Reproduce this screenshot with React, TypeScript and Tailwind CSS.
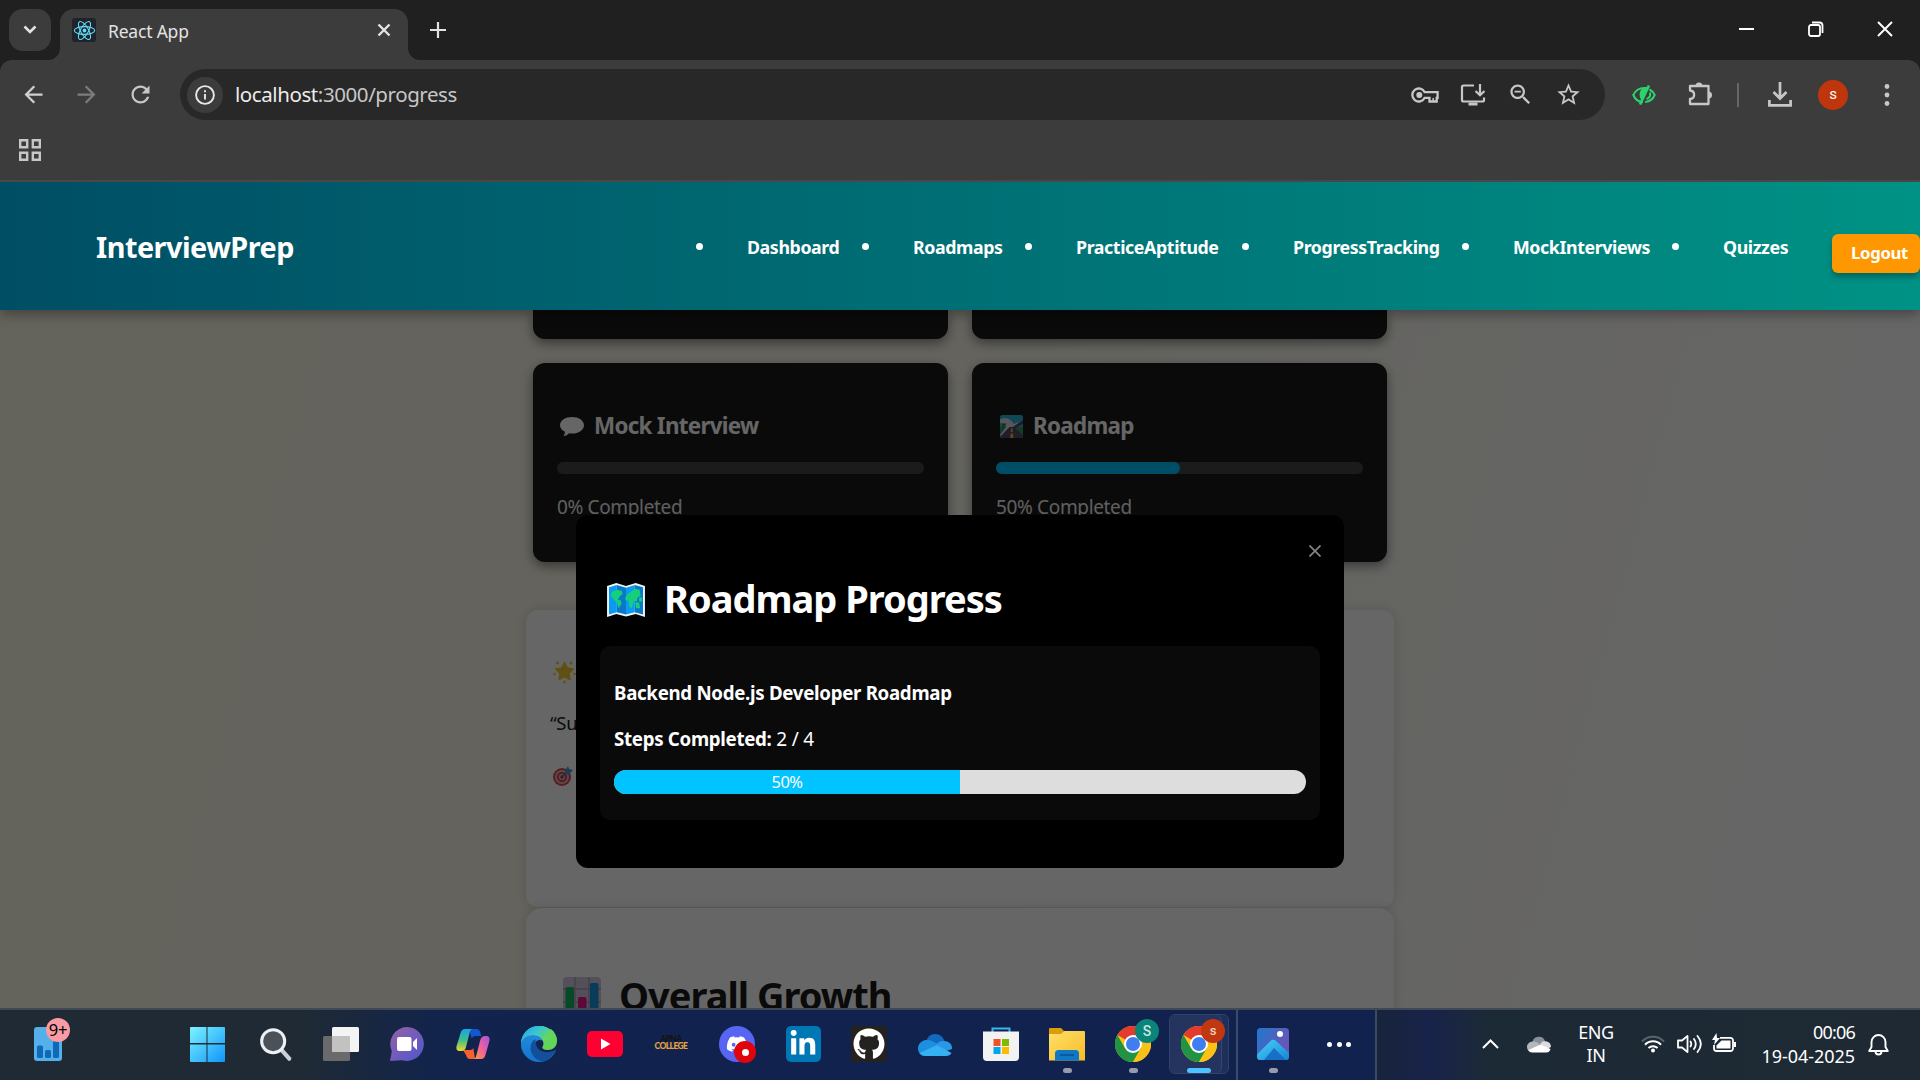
import React from "react";
import { FaGithub, FaDiscord, FaLinkedinIn } from "react-icons/fa";

const SANS = "font-['Noto_Sans','Open_Sans',sans-serif]";

function Glyph({ d, size = 27, className = "" }: { d: string; size?: number; className?: string }) {
  return (
    <svg width={size} height={size} viewBox="0 0 24 24" fill="currentColor" className={"shrink-0 " + className}>
      <path d={d} />
    </svg>
  );
}

function TabStrip() {
  return (
    <div className="flex h-[60px] shrink-0 bg-[#202020] text-[#e3e3e3]">
      <div className="mt-[9px] ml-[9px] flex h-[42px] w-[42px] items-center justify-center rounded-[14px] bg-[#3c3c3c]">
        <svg width="14" height="10" viewBox="0 0 14 10" fill="none" stroke="currentColor" strokeWidth="2.6">
          <path d="M1.5 1.5 7 7l5.500-5.500" />
        </svg>
      </div>
      <svg width="12" height="12" viewBox="0 0 12 12" className="mt-12 -ml-[3px] shrink-0">
        <path d="M12 0v12H0A12 12 0 0 0 12 0z" fill="#3c3c3c" />
      </svg>
      <div className="mt-[9px] flex h-[51px] w-[348px] items-start rounded-t-[14px] bg-[#3c3c3c] pt-[9px] pl-3">
        <div className="flex h-6 w-6 items-center justify-center rounded-[3px] bg-[#20232a]">
          <svg width="23" height="21" viewBox="0 0 23 21" fill="none" stroke="#61dafb" strokeWidth="1.1">
            <circle cx="11.500" cy="10.500" r="1.900" fill="#61dafb" stroke="none" />
            <ellipse cx="11.500" cy="10.500" rx="10.200" ry="3.900" />
            <ellipse cx="11.500" cy="10.500" rx="10.200" ry="3.900" transform="rotate(60 11.500 10.500)" />
            <ellipse cx="11.500" cy="10.500" rx="10.200" ry="3.900" transform="rotate(120 11.500 10.500)" />
          </svg>
        </div>
        <span className="mt-px ml-[12px] w-[269px] text-[17.500px] leading-6 tracking-[-0.2px] whitespace-nowrap">React App</span>
        <svg width="14" height="14" viewBox="0 0 14 14" stroke="currentColor" strokeWidth="2.4" className="mt-[5px] shrink-0">
          <path d="M1.500 1.500 12.500 12.500M12.500 1.500 1.500 12.500" />
        </svg>
      </div>
      <svg width="12" height="12" viewBox="0 0 12 12" className="mt-12 shrink-0">
        <path d="M0 0v12h12A12 12 0 0 1 0 0z" fill="#3c3c3c" />
      </svg>
      <svg width="16" height="16" viewBox="0 0 16 16" stroke="currentColor" strokeWidth="2.2" className="mt-[22px] ml-[10px]">
        <path d="M8 0v16M0 8h16" />
      </svg>
      <div className="mt-[21px] mr-[27px] ml-auto flex gap-[53px] text-white">
        <svg width="16" height="16" viewBox="0 0 16 16" stroke="currentColor" strokeWidth="2">
          <path d="M0 8h15" />
        </svg>
        <svg width="16" height="16" viewBox="0 0 16 16" fill="none" stroke="currentColor" strokeWidth="1.800">
          <rect x="1" y="4" width="11" height="11" rx="2" />
          <path d="M4 1.500h7.500a3 3 0 0 1 3 3V12" />
        </svg>
        <svg width="16" height="16" viewBox="0 0 16 16" stroke="currentColor" strokeWidth="1.900">
          <path d="M1 1l14 14M15 1 1 15" />
        </svg>
      </div>
    </div>
  );
}

function Cell({ children }: { children: React.ReactNode }) {
  return <div className="flex h-[51px] w-12 shrink-0 items-center justify-center">{children}</div>;
}

function Toolbar() {
  return (
    <div className="shrink-0 bg-[#202020]">
      <div className="flex h-[120px] flex-col rounded-t-[12px] bg-[#3c3c3c] text-[#c7c7c7]">
        <div className="mt-[9px] flex h-[51px] items-center">
          <Glyph className="ml-5 text-[#d0d0d0]" d="M20 11H7.830l5.590-5.590L12 4l-8 8 8 8 1.410-1.410L7.830 13H20v-2z" />
          <Glyph className="ml-[26px] text-[#7c7c7c]" d="M12 4l-1.410 1.410L16.170 11H4v2h12.170l-5.580 5.590L12 20l8-8z" />
          <Glyph
            className="ml-[27px]"
            d="M17.650 6.350C16.200 4.900 14.210 4 12 4c-4.420 0-7.990 3.580-7.990 8s3.570 8 7.990 8c3.730 0 6.840-2.550 7.730-6h-2.080c-.820 2.330-3.040 4-5.650 4-3.310 0-6-2.690-6-6s2.690-6 6-6c1.660 0 3.140.690 4.220 1.780L13 11h7V4l-2.350 2.350z"
          />
          <div className="ml-[26px] flex h-[51px] w-[1425px] items-center rounded-full bg-[#282828] pr-3 pl-[7px]">
            <div className="flex h-[36px] w-[36px] items-center justify-center rounded-full bg-[#3c3c3c]">
              <svg width="20" height="20" viewBox="0 0 20 20" fill="none" stroke="#e8e8e8" strokeWidth="1.900">
                <circle cx="10" cy="10" r="8.900" />
                <path d="M10 9v5.500M10 5.300v2" />
              </svg>
            </div>
            <span className="mt-[-1px] ml-3 grow text-[20.500px] leading-7 tracking-[-0.42px] whitespace-nowrap">
              <span className="text-[#ececec]">localhost</span>:3000/progress
            </span>
            <Cell>
              <svg width="28" height="18" viewBox="0 0 28 18" fill="none" stroke="currentColor" strokeWidth="2.300">
                <path d="M13.700 6.200A6.500 6.500 0 1 0 13.700 11.800H18.500V15.500H25.700V11.800H26.600V6.200z" />
                <circle cx="8.300" cy="9" r="3" fill="currentColor" stroke="none" />
                <path d="M22.200 12v3.500" strokeWidth="1.500" />
              </svg>
            </Cell>
            <Cell>
              <svg width="26" height="24" viewBox="0 0 26 24" fill="none" stroke="currentColor" strokeWidth="2.200">
                <path d="M14 2.500H3.500a1.500 1.500 0 0 0-1.500 1.500v13a1.500 1.500 0 0 0 1.500 1.500h19a1.500 1.500 0 0 0 1.500-1.500v-2.500M20 1v11M15.500 8 20 12.300 24.500 8" />
                <path d="M8.500 19.500h9v3h-9z" fill="currentColor" stroke="none" />
              </svg>
            </Cell>
            <Cell>
              <Glyph className="-ml-px" d="M15.500 14h-.790l-.280-.270C15.410 12.590 16 11.110 16 9.500 16 5.910 13.090 3 9.500 3S3 5.910 3 9.500 5.910 16 9.500 16c1.610 0 3.090-.590 4.230-1.570l.270.280v.790l5 4.990L20.490 19l-4.990-5zm-6 0C7.010 14 5 11.990 5 9.500S7.010 5 9.500 5 14 7.010 14 9.500 11.990 14 9.500 14zM6.700 8.700h5.600v1.600H6.700z" />
            </Cell>
            <Cell>
              <Glyph className="-ml-px" d="M22 9.240l-7.190-.620L12 2 9.190 8.630 2 9.240l5.460 4.730L5.820 21 12 17.270 18.180 21l-1.630-7.030L22 9.240zM12 15.400l-3.760 2.270 1-4.280-3.320-2.880 4.380-.380L12 6.100l1.710 4.040 4.380.380-3.320 2.880 1 4.280L12 15.400z" />
            </Cell>
          </div>
          <div className="ml-[15px] flex items-center">
            <Cell>
              <svg width="24" height="20" viewBox="0 0 24 20" fill="none" stroke="#2bd36d" strokeWidth="2">
                <path d="M11 17C6 17 3 14 1.300 10 3.500 5.500 7 3 12 3h2.500M17.500 4.500c2.500 1.300 4.200 3.200 5.200 5.500-1.700 4-5 6.500-9.500 7" />
                <path d="M17 .5 8 19.500" strokeWidth="2.600" />
                <path d="M14.500 3C9 4 7.300 8 9.500 13.500z" fill="#2bd36d" />
                <path d="M18 7.500c.8 3-.6 5.500-3.500 6.500" />
              </svg>
            </Cell>
            <div className="ml-2 -mt-px">
              <Cell>
                <svg width="26" height="26" viewBox="0 0 26 26" fill="none" stroke="currentColor" strokeWidth="2.300" strokeLinejoin="round">
                  <path d="M3 5h18.500v18H3v-5c5.500-.500 5.500-8 0-8.500z" />
                  <path d="M8.500 5a3.500 3.500 0 0 1 7 0zM21.500 10.600a3.500 3.500 0 0 1 0 7z" fill="currentColor" stroke="none" />
                </svg>
              </Cell>
            </div>
            <div className="ml-[13px] h-6 w-[2px] bg-[#666]" />
            <div className="ml-[17px]">
              <Cell>
                <svg width="24" height="25" viewBox="0 0 24 25" fill="none" stroke="currentColor" strokeWidth="2.700">
                  <path d="M12 0v16M5.500 10 12 16.500 18.500 10M1.400 18v5.300h21.200V18" />
                </svg>
              </Cell>
            </div>
            <div className="ml-[14px] flex h-[30px] w-[30px] items-center justify-center rounded-full bg-[#bf360c] font-['Roboto',sans-serif] text-[15px] text-white">
              s
            </div>
            <svg width="24" height="24" viewBox="0 0 24 24" fill="currentColor" className="ml-[27px]">
              <circle cx="12" cy="3.500" r="2.400" />
              <circle cx="12" cy="12" r="2.400" />
              <circle cx="12" cy="20.500" r="2.400" />
            </svg>
          </div>
        </div>
        <svg width="22" height="22" viewBox="0 0 22 22" fill="none" stroke="currentColor" strokeWidth="2.400" className="mt-[19px] ml-[19px]">
          <path d="M1.200 1.200h7v7h-7zM13.800 1.200h7v7h-7zM1.200 13.800h7v7h-7zM13.800 13.800h7v7h-7z" />
        </svg>
      </div>
      <div className="h-[2px] bg-[#4a4748]" />
    </div>
  );
}

function NavItem({ label, className }: { label: string; className: string }) {
  return (
    <li className={"flex items-center " + className}>
      <span className="mt-[-1px] h-[7px] w-[7px] rounded-full bg-white" />
      <span className="ml-[44px] w-0 whitespace-nowrap">{label}</span>
    </li>
  );
}

function Header() {
  return (
    <header className="relative z-20 flex h-32 items-center bg-linear-to-r from-[#004e64] to-[#009285] text-white shadow-[0_4px_12px_rgba(0,0,0,0.35)]">
      <span className="mt-[2px] ml-24 w-[600px] text-[28.800px] font-bold tracking-[-0.5px] whitespace-nowrap">InterviewPrep</span>
      <ul className="mt-[2px] flex items-center text-[17.800px] font-bold tracking-[-0.400px]">
        <NavItem label="Dashboard" className="w-[166px]" />
        <NavItem label="Roadmaps" className="w-[163px]" />
        <NavItem label="PracticeAptitude" className="w-[217px]" />
        <NavItem label="ProgressTracking" className="w-[220px]" />
        <NavItem label="MockInterviews" className="w-[210px]" />
        <NavItem label="Quizzes" className="w-[160px]" />
      </ul>
      <button className="mt-[15px] flex h-[39px] w-[88px] items-center rounded-[6px] bg-[#ff9800] pb-[2px] pl-[19px] text-[16.700px] font-bold tracking-[-0.3px] shadow-[0_4px_6px_rgba(0,0,0,0.3)]">
        Logout
      </button>
    </header>
  );
}

function StatCard({ icon, title, value }: { icon: React.ReactNode; title: string; value: number }) {
  return (
    <div className="h-[199px] w-[415px] rounded-[12px] bg-[#1a1a1a] px-6 pt-[48px] text-white shadow-[0_4px_12px_rgba(0,0,0,0.45)]">
      <div className="flex h-[30px] items-center">
        <div className="ml-[3px] w-[34px]">{icon}</div>
        <span className="text-[22.400px] leading-[30px] font-bold tracking-[-0.7px] whitespace-nowrap">{title}</span>
      </div>
      <div className="mt-[21px] h-3 w-[367px] rounded-full bg-[#444]">
        <div className="h-3 rounded-full bg-[#00c3ff]" style={{ width: `${value}%` }} />
      </div>
      <p className="mt-[21px] text-[19px] leading-6 tracking-[-0.35px] text-[#eee]">{value}% Completed</p>
    </div>
  );
}

function SpeechIcon() {
  return (
    <svg width="24" height="19" viewBox="0 0 24 19" fill="#fff">
      <path d="M12 0c6.500 0 12 3.500 12 8.200s-5.500 8.300-12 8.300c-1 0-2-.1-3-.3-1.300 1.600-3.500 2.700-5.500 2.600 1-1 1.500-2.500 1.300-4.200C2 13.200 0 11 0 8.200 0 3.500 5.500 0 12 0z" />
    </svg>
  );
}

function MotorwayIcon() {
  return (
    <svg width="23" height="23" viewBox="0 0 23 23" className="ml-px">
      <rect width="23" height="23" rx="2.500" fill="#2fb5d8" />
      <path d="M0 12h23v8.500a2.500 2.500 0 0 1-2.500 2.500h-18A2.500 2.500 0 0 1 0 20.500z" fill="#2c9a63" />
      <path d="M23 5 9 14l3 1 11-6z" fill="#51486f" />
      <path d="M10 11h3.500L23 20.500a2.500 2.500 0 0 1-2.500 2.500h-18L0 21z" fill="#51486f" />
      <path d="M0 4.500 4 3c5 0 8 3 10 6l7-3-8 6H9.500L1 21l-1-1 6-8C5 9 3 8 0 8z" fill="#d9d9e4" />
      <path d="M2 8.500h4.500l-3 6-1.500-1z" fill="#1e8a52" />
      <path d="M11.300 13h.9l.6 4h-2.100zM10.600 18.500h2.400l.4 4.500h-3.200z" fill="#f3b32f" />
    </svg>
  );
}

function MapIcon() {
  return (
    <svg width="38" height="34" viewBox="0 0 39 35">
      <path d="m0 3 9.500-3 10 3 10-3L39 3v32l-9.500-3-10 2.500-10-2.500L0 35z" fill="#f1f5f8" />
      <path d="M2 4.500 10 2v28L2 32.500zM19.500 5l9-3v28l-9 2.500z" fill="#0a9bf0" />
      <path d="M10 2l9.500 3v27.500L10 30zM28.500 2 37 4.500v28L28.500 30z" fill="#0a78c8" />
      <path d="M5 9l5-2 5 1 1 3-3 3-2 3 3 1 1 3-3 5-2-6-3-3-3-4zM18.500 16l2-4 4-3 4-3 5 1 1 6-3 2-1 4-3-1-2 8-3-2v-6h-3zM29 20h4l1 6h-4zM33 15h3v4h-3z" fill="#14d07c" />
    </svg>
  );
}

function StarIcon() {
  return (
    <svg width="24" height="24" viewBox="0 0 24 24" fill="#f0c92c">
      <path d="m11.500 2.500 2.800 5.600 6 .8-4.300 4.400 1 6.200-5.500-2.900L6 19.500l1-6.200-4.300-4.400 6-.8z" stroke="#f0c92c" strokeWidth="1.500" strokeLinejoin="round" />
      <circle cx="4.500" cy="3" r="1.400" />
      <circle cx="18" cy="3" r="1.400" />
      <circle cx="1.500" cy="14" r="1.300" />
      <circle cx="21.500" cy="14" r="1.300" />
      <circle cx="11.500" cy="22" r="1.400" />
    </svg>
  );
}

function TargetIcon() {
  return (
    <svg width="20" height="20" viewBox="0 0 20 20">
      <circle cx="9" cy="11" r="9" fill="#e5484d" />
      <circle cx="9" cy="11" r="6.900" fill="#d6c4c8" />
      <circle cx="9" cy="11" r="5.200" fill="#e5484d" />
      <circle cx="9" cy="11" r="3" fill="#d6c4c8" />
      <circle cx="9" cy="11" r="1.700" fill="#c22f3e" />
      <path d="m9 11 5-5" stroke="#3f6f96" strokeWidth="1.500" />
      <path d="m12 5 3-5 1 3 4 1-4 4-4 1z" fill="#3aa0dd" />
    </svg>
  );
}

function ChartIcon() {
  return (
    <svg width="38" height="38" viewBox="0 0 38 38" className="shrink-0">
      <rect width="38" height="38" rx="4" fill="#d3c8e0" />
      <path d="M12 0v38M26 0v38M0 12h38M0 25h38" stroke="#a79bb8" strokeWidth="1.300" />
      <rect x="2.500" y="10" width="8.500" height="28" rx="1.500" fill="#12b463" />
      <rect x="15" y="20" width="8.500" height="18" rx="1.500" fill="#e5178f" />
      <rect x="27" y="6" width="8.500" height="32" rx="1.500" fill="#1596e0" />
    </svg>
  );
}

function ProgressPage() {
  return (
    <div className="relative h-[826px] shrink-0 overflow-hidden bg-[linear-gradient(105deg,#fbf8e6_0%,#faf8ea_45%,#ffffff_92%)]">
      <Header />
      <main className="flex flex-col items-center">
        <div className="flex gap-6">
          <div className="h-[29px] w-[415px] rounded-b-[12px] bg-[#1a1a1a] shadow-[0_4px_12px_rgba(0,0,0,0.45)]" />
          <div className="h-[29px] w-[415px] rounded-b-[12px] bg-[#1a1a1a] shadow-[0_4px_12px_rgba(0,0,0,0.45)]" />
        </div>
        <div className="mt-6 flex gap-6">
          <StatCard icon={<SpeechIcon />} title="Mock Interview" value={0} />
          <StatCard icon={<MotorwayIcon />} title="Roadmap" value={50} />
        </div>
        <section className="mt-12 h-[297px] w-[868px] rounded-[12px] bg-white px-6 pt-[50px] text-[18.500px] text-[#222] shadow-[0_0_12px_rgba(0,0,0,0.15)]">
          <div className="ml-[3px]">
            <StarIcon />
          </div>
          <p className="mt-[27px] leading-6 tracking-[-0.3px]">“Suc</p>
          <div className="mt-[31px] ml-[3px]">
            <TargetIcon />
          </div>
        </section>
        <section className="mt-px flex h-[200px] w-[868px] items-start rounded-[16px] bg-white pt-[64px] pl-[37px] text-[#1a1a1a] shadow-[0_0_12px_rgba(0,0,0,0.15)]">
          <div className="mt-[5px]">
            <ChartIcon />
          </div>
          <h2 className="ml-[18px] text-[38px] leading-[46px] font-bold tracking-[-1px]">Overall Growth</h2>
        </section>
      </main>
      <div className="absolute inset-0 z-10 bg-black/60 pt-[333px]">
        <div className="mx-auto h-[353px] w-[768px] rounded-[12px] bg-black px-6 text-white">
          <div className="flex h-[59px] justify-end pt-[30px]">
            <svg width="12" height="12" viewBox="0 0 12 12" stroke="#858585" strokeWidth="1.700" className="-mr-px">
              <path d="M.5.5l11 11M11.500.5l-11 11" />
            </svg>
          </div>
          <div className="flex h-[46px] items-center">
            <div className="mt-[6px] ml-[7px] w-[57px]">
              <MapIcon />
            </div>
            <h1 className="mt-px text-[38px] leading-[46px] font-bold tracking-[-1px] whitespace-nowrap">Roadmap Progress</h1>
          </div>
          <div className="mt-[26px] h-[174px] rounded-[10px] bg-[#0a0a0a] px-[14px] pt-[35px] text-[19px] leading-6">
            <p className="text-[18.700px] font-bold tracking-[-0.300px]">Backend Node.js Developer Roadmap</p>
            <p className="mt-[22px] tracking-[-0.2px]">
              <strong className="text-[18.700px] tracking-[-0.3px]">Steps Completed:</strong> 2 / 4
            </p>
            <div className="mt-[19px] h-6 overflow-hidden rounded-full bg-[#ddd]">
              <div className="h-6 w-1/2 bg-[#00c3ff] text-center text-[16.500px] leading-6 tracking-[-0.5px]">50%</div>
            </div>
          </div>
        </div>
      </div>
    </div>
  );
}

function ChromeIcon() {
  return (
    <svg width="36" height="36" viewBox="0 0 36 36">
      <circle cx="18" cy="18" r="18" fill="#fbc116" />
      <path d="M18 18 2.410 9A18 18 0 0 1 33.590 9H18z" fill="#e33b2e" />
      <path d="M2.410 9A18 18 0 0 0 18 36l7.800-13.500L18 18l-7.800 4.500z" fill="#229342" />
      <path d="M18 9h15.590A18 18 0 0 1 18 36l7.800-13.500z" fill="#fbc116" />
      <circle cx="18" cy="18" r="9" fill="#fff" />
      <circle cx="18" cy="18" r="7" fill="#3f7df0" />
    </svg>
  );
}

function TaskIcon({ children, mark }: { children: React.ReactNode; mark?: "idle" | "active" }) {
  return (
    <div className="flex h-[70px] w-[66px] shrink-0 flex-col items-center">
      <div className="relative mt-[16px] flex h-9 w-9 items-center justify-center">{children}</div>
      {mark === "idle" && <div className="mt-[6px] h-[5px] w-[9px] rounded-full bg-[#969cae]" />}
      {mark === "active" && <div className="mt-[6px] h-[5px] w-6 rounded-full bg-[#4cc2ff]" />}
    </div>
  );
}

function Taskbar() {
  return (
    <footer className="flex h-[72px] shrink-0 border-t-2 border-[#404858] bg-[linear-gradient(90deg,#1f2a34_0px,#1f2a34_300px,#12244c_440px,#11224f_640px,#11224f_1376px,#18233c_1377px,#18234a_1430px,#1c2a35_1490px,#1e2933_1920px)] text-white">
      <div className="relative mt-[17px] ml-[34px] h-[34px] w-[28px]">
        <svg width="28" height="34" viewBox="0 0 28 34">
          <rect width="28" height="34" rx="3" fill="#54b0ea" />
          <rect x="3" y="18.500" width="6" height="12.500" rx="1.500" fill="#1069b4" />
          <rect x="11" y="23" width="6" height="8" rx="1.500" fill="#1069b4" />
          <rect x="19" y="11" width="6" height="20" rx="1.500" fill="#1069b4" />
        </svg>
        <span className="absolute -top-[9px] left-3 flex h-6 w-6 items-center justify-center rounded-full bg-[#f99aa5] text-[16.500px] tracking-[-0.3px] text-black">9+</span>
      </div>
      <div className="ml-[112px] flex">
        <div className="mr-[2px]">
          <TaskIcon>
            <svg width="36" height="36" viewBox="0 0 36 36">
              <defs>
                <linearGradient id="win" x1="0" y1="0" x2="1" y2="1">
                  <stop offset="0" stopColor="#7df3ff" />
                  <stop offset="1" stopColor="#0f95fb" />
                </linearGradient>
              </defs>
              <path d="M2 1h15.500v16H1V2a1 1 0 0 1 1-1zM18.500 1H35a1 1 0 0 1 1 1v15H18.500zM1 18.500h16.500V36H2a1 1 0 0 1-1-1zM18.500 18.500H36V35a1 1 0 0 1-1 1H18.500z" fill="url(#win)" />
            </svg>
          </TaskIcon>
        </div>
        <TaskIcon>
          <svg width="36" height="36" viewBox="0 0 36 36" className="ml-[2px]">
            <path d="m24.500 25 7.500 8.500" stroke="#c8d0dc" strokeWidth="4.500" strokeLinecap="round" />
            <circle cx="15" cy="15" r="12.200" fill="#4a5158" stroke="#eef0f4" strokeWidth="3.200" />
          </svg>
        </TaskIcon>
        <TaskIcon>
          <svg width="36" height="36" viewBox="0 0 36 36">
            <rect x="9" y="1" width="27" height="25" rx="1.500" fill="#f4f4f4" />
            <rect x="0" y="10" width="27" height="25" rx="1.500" fill="#6a6a6a" />
            <path d="M9 10h18v16H9z" fill="#c2c2c2" />
          </svg>
        </TaskIcon>
        <TaskIcon>
          <svg width="36" height="36" viewBox="0 0 36 36">
            <defs>
              <linearGradient id="chat" x1="0" y1="0" x2="1" y2="1">
                <stop offset="0" stopColor="#9562a8" />
                <stop offset="1" stopColor="#4f56cc" />
              </linearGradient>
            </defs>
            <path d="M18 1a17 17 0 1 1-5 33.300L1 35l1.800-10A17 17 0 0 1 18 1z" fill="url(#chat)" />
            <rect x="8" y="11" width="14.500" height="14" rx="2" fill="#fff" />
            <path d="m24 16 4-4v12l-4-4z" fill="#fff" />
          </svg>
        </TaskIcon>
        <TaskIcon>
          <svg width="36" height="36" viewBox="0 0 36 36">
            <defs>
              <linearGradient id="cpa" x1="0" y1="0" x2="0" y2="1">
                <stop offset="0" stopColor="#1ba3e8" />
                <stop offset=".5" stopColor="#3cbf8a" />
                <stop offset="1" stopColor="#f4d52a" />
              </linearGradient>
              <linearGradient id="cpb" x1="1" y1="0" x2="0" y2="1">
                <stop offset="0" stopColor="#a154e0" />
                <stop offset=".5" stopColor="#f0609a" />
                <stop offset="1" stopColor="#fca03c" />
              </linearGradient>
            </defs>
            <path d="M14 3h7.500c2.300 0 3.200 1.500 4 4l.8 3h-6.800l-3 2z" fill="#1556d0" />
            <path d="M8 24h7c2 0 2.700-1 3.300-2L20 33h-5c-2.300 0-3.200-1.500-4-4z" fill="#f5602e" />
            <path d="M10 3h8c-2 0-2.800 1.500-3.300 3.500L11 21c-.7 2.500-2 4-4.500 4H5c-3 0-4.200-2-3.400-5l3.800-12.500C6.300 4.500 7.500 3 10 3z" fill="url(#cpa)" />
            <path d="M26 33h-8c2 0 2.800-1.500 3.300-3.500L25 15c.7-2.500 2-5 4.500-5H31c3 0 4.200 2 3.400 5l-3.800 13.500C29.700 31.500 28.500 33 26 33z" fill="url(#cpb)" />
          </svg>
        </TaskIcon>
        <TaskIcon>
          <svg width="36" height="36" viewBox="0 0 36 36">
            <defs>
              <linearGradient id="edt" x1="0" y1="0" x2="1" y2=".6">
                <stop offset="0" stopColor="#1fa3e4" />
                <stop offset=".5" stopColor="#38c4d4" />
                <stop offset="1" stopColor="#6edb4a" />
              </linearGradient>
              <linearGradient id="edb" x1="0" y1="0" x2="0" y2="1">
                <stop offset="0" stopColor="#2492e0" />
                <stop offset="1" stopColor="#1573cc" />
              </linearGradient>
            </defs>
            <circle cx="18" cy="18" r="18" fill="url(#edb)" />
            <path d="M0 17C1 7 8 0 18 0c11 0 18 8 18 15 0 6-4.500 9-9 9-3.500 0-5.500-1-5.500-2.500 0-1 1.200-1.700 1.200-4C22.700 13 18 9 12 9 6 9 1.500 12.500 0 17z" fill="url(#edt)" />
            <path d="M14.500 13C9 16 8 24 12 29.500c2.500 3.500 7 6 11 5.500 5-1.500 9-5 11-9.500.3-.8-.3-1-1-.7-9 4-18-1-18.500-7.800-.1-1.500 0-3 0-4z" fill="#134f9b" />
            <path d="M14.500 17c.5 7 9 12 19.500 7.500L36 24V15l-9 9c-5-.500-6-1.500-5.500-3 1-2 1.500-4 .5-6-2.500-2-7-1-7.500 2z" fill="#12244f" />
            <path d="M36 15c0 6-4.500 9-9 9-3.500 0-5.500-1-5.500-2.500 0-1 1.200-1.700 1.200-4 0-2-1-4-2.700-5.500L30 3c4 3 6 8 6 12z" fill="#62d65a" />
            <path d="M0 17C1 7 8 0 18 0c5.500 0 10 2 13 5L22.700 16C22 12 18 9 12 9 6 9 1.500 12.500 0 17z" fill="url(#edt)" />
          </svg>
        </TaskIcon>
        <TaskIcon>
          <svg width="36" height="26" viewBox="0 0 36 26">
            <rect width="36" height="26" rx="5" fill="#ff0033" />
            <path d="m14 7.500 9.500 5.500-9.500 5.500z" fill="#fff" />
          </svg>
        </TaskIcon>
        <TaskIcon>
          <div className="-mt-[3px] flex flex-col items-center font-['Lato',sans-serif] text-[8.500px] leading-[7px] font-black tracking-[-0.6px]">
            <span className="text-[#14130f]">APNA</span>
            <span className="text-[#e8a33a]">COLLEGE</span>
          </div>
        </TaskIcon>
        <TaskIcon>
          <div className="flex h-9 w-9 items-center justify-center rounded-full bg-[#5865f2]">
            <FaDiscord size={22} />
          </div>
          <div className="absolute -right-px -bottom-px flex h-[22px] w-[22px] items-center justify-center rounded-full bg-[#e0040b]">
            <div className="h-[7px] w-[7px] rounded-full bg-white" />
          </div>
        </TaskIcon>
        <TaskIcon>
          <div className="flex h-9 w-[35px] items-center justify-center rounded-[5px] bg-[#0077b5]">
            <FaLinkedinIn size={28} />
          </div>
        </TaskIcon>
        <TaskIcon>
          <div className="flex h-9 w-9 items-center justify-center bg-[#24211f]">
            <FaGithub size={32} />
          </div>
        </TaskIcon>
        <TaskIcon>
          <svg width="36" height="24" viewBox="0 0 36 24" className="mt-[1px]">
            <path d="M9 11C9 5 13 1 18 1s8 3 9.500 7l-9 8z" fill="#1468bd" />
            <path d="M9 7c4-.5 7 1 10 3l8 5-16 8H8c-4 0-7-3-7-7.500S4.500 7.500 9 7z" fill="#1d8fe0" />
            <path d="M19 12c2-3.500 5-4.500 8.500-4 4.500.5 8 3 7.500 8l-9 3z" fill="#2897e6" />
            <path d="M2.500 20 20 12l14.500 8c-1 2-3 3-5.500 3H8c-2 0-4-1-5.500-3z" fill="#35b0f2" />
          </svg>
        </TaskIcon>
        <TaskIcon>
          <svg width="36" height="36" viewBox="0 0 36 36">
            <path d="M9.500 7V2.500h17V7" fill="none" stroke="#3db4ee" strokeWidth="2" />
            <path d="M0 5.500h36V31a4 4 0 0 1-4 4H4a4 4 0 0 1-4-4z" fill="#f2f2f2" />
            <path d="M10.500 13h7v7h-7z" fill="#f25022" />
            <path d="M19 13h7v7h-7z" fill="#7fba00" />
            <path d="M10.500 21h7v7h-7z" fill="#00a4ef" />
            <path d="M19 21h7v7h-7z" fill="#ffb900" />
          </svg>
        </TaskIcon>
        <TaskIcon mark="idle">
          <svg width="36" height="36" viewBox="0 0 36 36">
            <defs>
              <linearGradient id="fold" x1="0" y1="0" x2="1" y2="1">
                <stop offset="0" stopColor="#ffdf6b" />
                <stop offset="1" stopColor="#f6bd26" />
              </linearGradient>
            </defs>
            <path d="M1 2h11l3 3-3 4H0V3a1 1 0 0 1 1-1z" fill="#dc9c0c" />
            <path d="M0 8h12l3-3h20a1 1 0 0 1 1 1v28.500H0z" fill="url(#fold)" />
            <path d="M6 34.500v-7a3.500 3.500 0 0 1 3.500-3.500h17a3.500 3.500 0 0 1 3.500 3.500v7z" fill="#0f78c6" />
            <path d="M11 29h14" stroke="#0a4f92" strokeWidth="1.500" />
          </svg>
        </TaskIcon>
        <TaskIcon mark="idle">
          <ChromeIcon />
          <span className="absolute -top-[7px] left-5 flex h-6 w-6 items-center justify-center rounded-full bg-[#0a8577] font-['Roboto',sans-serif] text-[14px] font-medium text-[#c9e6e2]">S</span>
        </TaskIcon>
        <div className="-mr-[66px] flex h-[70px] w-[66px] justify-center pt-1">
          <div className="h-[60px] w-[60px] rounded-[6px] border border-[#31426a] bg-[#1e2f5c]">
            <div className="h-full w-[52px] rounded-[6px] border-r border-[#36466e] bg-[#24345f]" />
          </div>
        </div>
        <TaskIcon mark="active">
          <ChromeIcon />
          <span className="absolute -top-[7px] left-5 flex h-6 w-6 items-center justify-center rounded-full bg-[#c1370f] font-['Roboto',sans-serif] text-[13px] font-medium text-[#f0d2c8]">s</span>
        </TaskIcon>
        <div className="ml-[4px] h-[70px] w-[2px] bg-[#3c4a6c]" />
        <div className="ml-[2px]">
          <TaskIcon mark="idle">
            <svg width="32" height="32" viewBox="0 0 32 32">
              <defs>
                <linearGradient id="pho" x1="0" y1="0" x2="1" y2=".5">
                  <stop offset="0" stopColor="#2078cc" />
                  <stop offset="1" stopColor="#6a55b8" />
                </linearGradient>
                <linearGradient id="mtn" x1="0" y1="0" x2="1" y2="1">
                  <stop offset="0" stopColor="#4bd0f8" />
                  <stop offset="1" stopColor="#1488d8" />
                </linearGradient>
              </defs>
              <rect width="32" height="32" rx="3.500" fill="url(#pho)" />
              <path d="M13.500 13a4 4 0 0 1 5.500 0l13 12v3.500a3.500 3.500 0 0 1-3.500 3.500h-25A3.500 3.500 0 0 1 0 28.500v-2z" fill="url(#mtn)" />
              <path d="m17 20 12 12H7z" fill="#1670c4" />
              <circle cx="23" cy="6" r="3" fill="#fff" />
            </svg>
          </TaskIcon>
        </div>
        <div className="flex h-[70px] w-[66px] items-center justify-center gap-[4.500px] pb-[2px]">
          <span className="h-[5px] w-[5px] rounded-full bg-white" />
          <span className="h-[5px] w-[5px] rounded-full bg-white" />
          <span className="h-[5px] w-[5px] rounded-full bg-white" />
        </div>
        <div className="ml-[3px] h-[70px] w-[2px] bg-[#3c4a5e]" />
      </div>
      <div className="mr-[31px] ml-auto flex h-[68px] items-center">
        <svg width="17" height="10" viewBox="0 0 17 10" fill="none" stroke="#fff" strokeWidth="2">
          <path d="m1 9 7.500-7.500L16 9" />
        </svg>
        <svg width="24" height="17" viewBox="0 0 24 17" className="ml-[28px]">
          <path d="M5.500 6a6.500 6.500 0 0 1 12.500-1l-6 5z" fill="#8b9096" />
          <path d="M5.500 5.500C9 5 11 7 13 8.500l-8.500 8C1.500 16 0 13.500 0 11s2-5.300 5.500-5.500z" fill="#b4b8bc" />
          <path d="M13 8c2-3 4-3 6-2.700 3 .5 5 2.500 5 5.500l-4 3z" fill="#dadcde" />
          <path d="m1.500 14 12-5.500L23.500 13c-.5 2-2 3.500-4 3.500h-14c-2 0-3.200-1-4-2.500z" fill="#fff" />
        </svg>
        <div className="ml-[26px] w-[38px] text-center text-[18px] leading-[23px] tracking-[-0.5px]">
          ENG
          <br />
          IN
        </div>
        <svg width="24" height="18" viewBox="0 0 24 18" fill="none" stroke="#fff" strokeWidth="2" className="ml-[26px]">
          <path d="M1 6.500a15 15 0 0 1 22 0" stroke="#5a646c" />
          <path d="M4 9.800a11 11 0 0 1 16 0M7.500 13a6.500 6.500 0 0 1 9 0" />
          <circle cx="12" cy="15.500" r="2" fill="#fff" stroke="none" />
        </svg>
        <svg width="25" height="20" viewBox="0 0 25 20" fill="none" stroke="#fff" strokeWidth="1.800" strokeLinecap="round" strokeLinejoin="round" className="ml-[12px]">
          <path d="M1 6.500h4L10.500 2v16L5 13.500H1zM13.500 7.500c1 1.700 1 3.500 0 5M17 5c2.300 3.200 2.300 6.800 0 10M20.500 2c4.200 5 4.200 11 0 16" />
        </svg>
        <svg width="25" height="20" viewBox="0 0 25 20" fill="none" stroke="#fff" strokeWidth="1.800" className="mb-[3px] ml-[10px]">
          <path d="M8 4.800h10.500a2.500 2.500 0 0 1 2.500 2.500v8.200a2.500 2.500 0 0 1-2.500 2.500h-14A2.500 2.500 0 0 1 2 15.500V12" />
          <path d="M9.500 7.500h9v8h-14v-3z" fill="#fff" stroke="none" />
          <path d="M22 9h2v5h-2z" fill="#fff" stroke="none" />
          <path d="M4.500 0 0 7h3l-1 5 6-7H5z" fill="#fff" stroke="none" />
        </svg>
        <div className="ml-[18px] w-[100px] text-right text-[18px] leading-[24.500px] tracking-[-0.050px]">
          <span className="tracking-[-0.8px]">00:06</span>
          <br />
          19-04-2025
        </div>
        <svg width="21" height="23" viewBox="0 0 21 23" fill="none" stroke="#fff" strokeWidth="1.900" strokeLinejoin="round" className="ml-[13px]">
          <path d="M3.500 9a7 7 0 0 1 14 0v5l2.300 4H1.200l2.300-4z" />
          <path d="M7.500 18.500a3 3 0 0 0 6 0" />
        </svg>
      </div>
    </footer>
  );
}

export default function App() {
  return (
    <div className={"flex h-[1080px] w-[1920px] flex-col overflow-hidden " + SANS}>
      <TabStrip />
      <Toolbar />
      <ProgressPage />
      <Taskbar />
    </div>
  );
}
